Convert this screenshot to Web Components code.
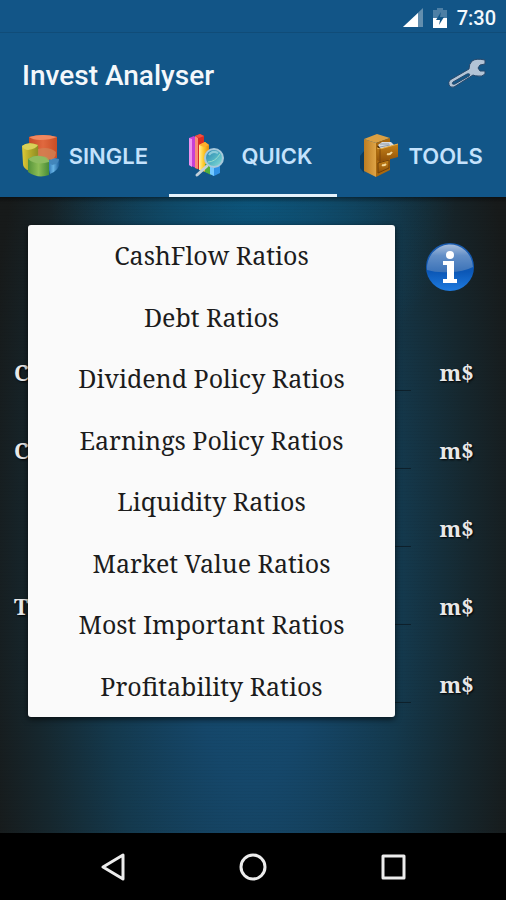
<!DOCTYPE html>
<html lang="en">
<head>
<meta charset="utf-8">
<meta name="viewport" content="width=device-width, initial-scale=1">
<title>Invest Analyser</title>
<style>
  body {
    margin: 0;
    background: #000;
    font-family: Roboto, sans-serif;
  }
</style>
</head>
<body>
<invest-app></invest-app>

<script>
const SERIF = '"Noto Serif", "Droid Serif", "DejaVu Serif Condensed", "DejaVu Serif", serif';

const icons = {
  single: `
    <svg width="40" height="44" viewBox="0 0 40 44" aria-hidden="true">
      <defs>
        <linearGradient id="red"><stop offset="0" stop-color="#c64a26"/><stop offset=".5" stop-color="#e0693f"/><stop offset="1" stop-color="#c84d25"/></linearGradient>
        <linearGradient id="yellow"><stop offset="0" stop-color="#e2cb36"/><stop offset=".4" stop-color="#b9ad2b"/><stop offset="1" stop-color="#8b8a22"/></linearGradient>
        <linearGradient id="green"><stop offset="0" stop-color="#549239"/><stop offset=".5" stop-color="#8cbd56"/><stop offset="1" stop-color="#468b37"/></linearGradient>
        <linearGradient id="blue"><stop offset="0" stop-color="#1b61a5"/><stop offset=".5" stop-color="#67b3e4"/><stop offset="1" stop-color="#175996"/></linearGradient>
      </defs>
      <path d="M8 3Q22 -1 36 3V24Q28 28 17 22L8 14Z" fill="url(#red)"/>
      <path d="M8 3Q22 -1 36 3Q29 6 19 6Q12 6 8 3Z" fill="#f08860"/>
      <path d="M1 12Q7 7 17 11L18 24Q8 23 8 37Q2 34 2 30Z" fill="url(#yellow)"/>
      <path d="M1 12Q7 7 17 11Q15 15 7 16Q3 16 1 12Z" fill="#d9d058"/>
      <path d="M26 28Q30 23 38 25Q41 35 29 40Z" fill="url(#blue)"/>
      <path d="M27 28Q31 23 38 25Q38 30 31 31Z" fill="#4286bb"/>
      <path d="M7 25Q13 21 20 22Q29 22 28 28V41Q17 45 7 38Z" fill="url(#green)"/>
      <path d="M7 25Q13 21 20 22Q29 22 28 28Q15 32 7 25Z" fill="#8ebc60"/>
      <path d="M17 15Q28 12 35 18Q35 26 27 26Q25 22 17 22Z" fill="#d08455" opacity=".75"/>
    </svg>`,

  quick: `
    <svg width="40" height="44" viewBox="6 0 40 44" overflow="visible" aria-hidden="true">
      <defs>
        <linearGradient id="lens" x1="0" y1="0" x2="1" y2="1"><stop offset="0" stop-color="#287eac"/><stop offset=".55" stop-color="#53b5c5"/><stop offset="1" stop-color="#92e3d9"/></linearGradient>
        <linearGradient id="gold"><stop offset="0" stop-color="#fff0a0"/><stop offset=".4" stop-color="#ffcf31"/><stop offset="1" stop-color="#e48b10"/></linearGradient>
      </defs>
      <path d="M1 4L6 2L8 4V34L1 31Z" fill="#c740d4"/>
      <path d="M1 4L4 5V33L1 31Z" fill="#ed91ee"/>
      <path d="M7 2L12 0L16 2V37L7 34Z" fill="#d92c25"/>
      <path d="M7 2L10 4V35L7 34Z" fill="#fa8b75"/>
      <path d="M7 2L12 0L16 2L11 4Z" fill="#f3523f"/>
      <path d="M11 11L17 8L21 11V39L11 36Z" fill="url(#gold)"/>
      <path d="M11 11L17 8L21 11L16 13Z" fill="#ffad2b"/>
      <path d="M17 30L23 30V41L17 38Z" fill="#4fae3c"/>
      <path d="M22 32L28 29L32 32V39L26 42L22 40Z" fill="#3192e6"/>
      <path d="M22 32L26 34V42L22 40Z" fill="#73c8ff"/>
      <path d="M9 41L19 32" stroke="#c3d0da" stroke-width="3" stroke-linecap="round"/>
      <circle cx="26" cy="24" r="9" fill="url(#lens)" stroke="#a8c9db" stroke-width="2"/>
      <path d="M21 21Q24 16 30 19" fill="none" stroke="#8bcbd9" stroke-width="2"/>
      <path d="M20 28Q27 28 32 20" fill="none" stroke="#9adecc" stroke-width="1"/>
    </svg>`,

  tools: `
    <svg width="40" height="44" viewBox="0 0 40 44" aria-hidden="true">
      <defs>
        <linearGradient id="side"><stop offset="0" stop-color="#bd7d22"/><stop offset="1" stop-color="#dfa446"/></linearGradient>
        <linearGradient id="drawer" x1="0" y1="0" x2="0" y2="1"><stop offset="0" stop-color="#c68319"/><stop offset="1" stop-color="#8f5008"/></linearGradient>
      </defs>
      <path d="M0 22L4 17V39L0 34Z" fill="#0b3d62"/>
      <path d="M4 5L16 9V43L4 37Z" fill="url(#side)"/>
      <path d="M4 5L17 0L30 4L16 9Z" fill="#dba043"/>
      <path d="M16 9L30 4V36L16 43Z" fill="#a9680e"/>
      <path d="M18 29L29 26V34L18 39Z" fill="url(#drawer)" stroke="#704009"/>
      <path d="M17 12L29 8V14L20 18Z" fill="#573308"/>
      <path d="M18 11L22 8L31 8L34 11L21 15Z" fill="#d6dbe0"/>
      <path d="M20 10L29 10M20 13L30 11" stroke="#909ba8"/>
      <path d="M17 14L20 15L38 10V23L20 28L17 26Z" fill="url(#drawer)"/>
      <path d="M17 14L20 15L38 10" fill="none" stroke="#eab14a"/>
      <path d="M20 15V28" stroke="#7c470a"/>
      <path d="M27 20Q30 21 32 18M22 31Q24 32 26 30" fill="none" stroke="#f4d99a" stroke-width="2"/>
    </svg>`,

  wrench: `
    <svg width="40" height="34" viewBox="0 0 40 34" aria-hidden="true">
      <path d="M3 23L22 12Q22 7 25 4Q29 1 38 3L38 7L33 8L31 11L33 14L38 14L38 17Q35 20 31 19Q28 19 26 18L7 30Q3 31 2 28Q1 25 3 23Z" fill="#b3c4d6" stroke="#28486a" stroke-width="1"/>
      <path d="M6 25L20 17Q24 16 22 19L8 27Q4 28 6 25Z" fill="#125688" stroke="#28486a" stroke-width="1"/>
    </svg>`,

  info: `
    <svg width="50" height="52" viewBox="0 0 50 52" aria-hidden="true">
      <defs>
        <linearGradient id="ball" x1="0" y1="0" x2="0" y2="1"><stop offset="0" stop-color="#1c5cae"/><stop offset=".6" stop-color="#0b57b6"/><stop offset="1" stop-color="#1e7be0"/></linearGradient>
        <linearGradient id="gloss" x1="0" y1="0" x2="0" y2="1"><stop offset="0" stop-color="#a9bfdd"/><stop offset=".4" stop-color="#638fc7"/><stop offset="1" stop-color="#3a72b8"/></linearGradient>
      </defs>
      <circle cx="25" cy="26" r="24" fill="url(#ball)"/>
      <path d="M2 29A23 24 0 1 1 48 26Q38 31 25 31Q12 32 2 29Z" fill="url(#gloss)"/>
      <circle cx="25" cy="14" r="4" fill="#fff"/>
      <path d="M18 20H29V38H32V42H18V38H22V24H18Z" fill="#fff"/>
    </svg>`
};

class StatusBar extends HTMLElement {
  constructor() {
    super();
    this.attachShadow({ mode: 'open' });
    this.shadowRoot.innerHTML = `
      <style>
        :host {
          display: flex;
          align-items: center;
          justify-content: flex-end;
          height: 33px;
          padding: 4px 10px 0 0;
          box-sizing: border-box;
          gap: 10px;
          background: #125587;
          border-bottom: 1px solid #104c78;
          color: #f2f8fc;
          font-size: 20px;
          font-weight: 500;
        }
        svg { display: block; }
      </style>
      <svg width="20" height="20" viewBox="0 0 20 20" aria-hidden="true">
        <path d="M0 19L20 0V19Z" fill="#638eae"/>
        <path d="M0 19L15 5V19Z" fill="#fff"/>
      </svg>
      <svg width="14" height="20" viewBox="0 0 14 20" aria-hidden="true">
        <path d="M4 0H10V2H14V20H0V2H4Z" fill="#4d7fa5"/>
        <path d="M0 10H14V20H0Z" fill="#fff"/>
        <path d="M8 4L3 12H7L6 17L11 9H7Z" fill="#125587"/>
      </svg>
      <slot></slot>
    `;
  }
}

class AppHeader extends HTMLElement {
  constructor() {
    super();
    this.attachShadow({ mode: 'open' });
    this.shadowRoot.innerHTML = `
      <style>
        :host {
          display: flex;
          align-items: center;
          justify-content: space-between;
          height: 82px;
          padding: 0 19px 0 22px;
          color: #f4f8fb;
        }
        h1 {
          margin: 0;
          padding-top: 2px;
          font-size: 28px;
          font-weight: 500;
        }
        button {
          padding: 0;
          border: 0;
          background: none;
          cursor: pointer;
        }
        svg { display: block; }
      </style>
      <h1><slot></slot></h1>
      <button type="button" aria-label="Settings">${icons.wrench}</button>
    `;
  }
}

class TabItem extends HTMLElement {
  connectedCallback() {
    this.attachShadow({ mode: 'open' });
    this.shadowRoot.innerHTML = `
      <style>
        :host {
          display: block;
          flex: 1;
        }
        button {
          display: flex;
          align-items: center;
          justify-content: center;
          gap: 8px;
          width: 100%;
          height: 82px;
          padding: 3px 0 0;
          border: 0;
          border-bottom: 3px solid transparent;
          background: none;
          color: #c4e2fc;
          font: 600 22px Inter, "Liberation Sans", sans-serif;
          cursor: pointer;
        }
        :host([active]) button { border-color: #e4f2fc; }
        svg { display: block; }
      </style>
      <button type="button" role="tab" aria-selected="${this.hasAttribute('active')}">
        ${icons[this.getAttribute('icon')]}
        <span><slot></slot></span>
      </button>
    `;
  }
}

class AmountRow extends HTMLElement {
  connectedCallback() {
    this.attachShadow({ mode: 'open' });
    this.shadowRoot.innerHTML = `
      <style>
        :host {
          display: grid;
          grid-template-columns: 136px 1fr 95px;
          align-items: center;
          height: 78px;
          color: #e8e8e8;
          font: bold 22px ${SERIF};
          text-shadow: 1px 1px 2px #000;
        }
        label, .unit { padding-bottom: 3px; }
        label { padding-left: 14px; }
        input {
          height: 36px;
          min-width: 0;
          box-sizing: border-box;
          border: 0;
          border-bottom: 1px solid #0d202b;
          background: none;
          color: inherit;
          font: inherit;
        }
        .unit {
          padding-right: 4px;
          text-align: center;
        }
      </style>
      <label for="amount"><slot></slot></label>
      <input id="amount" type="text" inputmode="decimal">
      <span class="unit">m$</span>
    `;
  }
}

class RatioMenu extends HTMLElement {
  constructor() {
    super();
    this.attachShadow({ mode: 'open' });
    this.items = [
      'CashFlow Ratios',
      'Debt Ratios',
      'Dividend Policy Ratios',
      'Earnings Policy Ratios',
      'Liquidity Ratios',
      'Market Value Ratios',
      'Most Important Ratios',
      'Profitability Ratios'
    ];
    this.render();
  }

  render() {
    this.shadowRoot.innerHTML = `
      <style>
        :host {
          display: flex;
          flex-direction: column;
          border-radius: 3px;
          background: #fafafa;
          box-shadow: 0 2px 6px rgba(0, 0, 0, 0.7);
        }
        button {
          flex: 1;
          padding: 0 0 1px;
          border: 0;
          background: none;
          color: #1c1c1c;
          font: 25px ${SERIF};
          cursor: pointer;
        }
      </style>
      ${this.items.map((item) => `<button type="button" role="menuitem">${item}</button>`).join('')}
    `;

    this.shadowRoot.querySelectorAll('button').forEach((button) => {
      button.addEventListener('click', () => {
        this.dispatchEvent(
          new CustomEvent('pick-ratio', {
            detail: { name: button.textContent },
            bubbles: true,
            composed: true,
          })
        );
      });
    });
  }
}

class NavBar extends HTMLElement {
  constructor() {
    super();
    this.attachShadow({ mode: 'open' });
    this.shadowRoot.innerHTML = `
      <style>
        :host {
          display: grid;
          grid-template-columns: repeat(3, 1fr);
          height: 67px;
          padding: 0 43px;
          background: #000;
        }
        button {
          padding: 0;
          border: 0;
          background: none;
          cursor: pointer;
        }
        svg {
          display: block;
          margin: auto;
          fill: none;
          stroke: #ececec;
          stroke-width: 3;
          stroke-linejoin: round;
        }
      </style>
      <button type="button" aria-label="Back">
        <svg width="28" height="28" viewBox="0 0 28 28"><path d="M4 14L24 2V26Z"/></svg>
      </button>
      <button type="button" aria-label="Home">
        <svg width="28" height="28" viewBox="0 0 28 28"><circle cx="14" cy="14" r="12"/></svg>
      </button>
      <button type="button" aria-label="Recent apps">
        <svg width="28" height="28" viewBox="0 0 28 28"><path d="M4 3H25V25H4Z"/></svg>
      </button>
    `;
  }
}

class InvestApp extends HTMLElement {
  constructor() {
    super();
    this.attachShadow({ mode: 'open' });
    this.shadowRoot.innerHTML = `
      <style>
        :host {
          display: flex;
          flex-direction: column;
          min-height: 100vh;
        }
        .top { background: #125688; }
        nav { display: flex; }
        main {
          position: relative;
          flex: 1;
          padding-top: 36px;
          background:
            linear-gradient(rgba(0, 0, 0, 0.4), transparent 6px),
            repeating-linear-gradient(rgba(0, 0, 0, 0.03) 0 1px, transparent 1px 3px),
            radial-gradient(ellipse 40% 30% at 50% 0, rgba(8, 94, 138, 0.7), transparent),
            radial-gradient(ellipse 54% 130% at 50% 60%, #144e73 0%, #15476a 25%, #14394d 55%, #16272e 80%, #171a1a 100%);
        }
        .info {
          display: block;
          margin: 8px 31px 41px auto;
          padding: 0;
          border: 0;
          background: none;
          cursor: pointer;
        }
        .info svg { display: block; }
        ratio-menu {
          position: absolute;
          top: 28px;
          right: 111px;
          bottom: 116px;
          left: 28px;
        }
      </style>
      <div class="top">
        <status-bar>7:30</status-bar>
        <app-header>Invest Analyser</app-header>
        <nav role="tablist">
          <tab-item icon="single">SINGLE</tab-item>
          <tab-item icon="quick" active>QUICK</tab-item>
          <tab-item icon="tools">TOOLS</tab-item>
        </nav>
      </div>
      <main>
        <button class="info" type="button" aria-label="Information">${icons.info}</button>
        <amount-row>C</amount-row>
        <amount-row>C</amount-row>
        <amount-row></amount-row>
        <amount-row>T</amount-row>
        <amount-row></amount-row>
        <ratio-menu role="menu"></ratio-menu>
      </main>
      <nav-bar></nav-bar>
    `;
  }
}

customElements.define('status-bar', StatusBar);
customElements.define('app-header', AppHeader);
customElements.define('tab-item', TabItem);
customElements.define('amount-row', AmountRow);
customElements.define('ratio-menu', RatioMenu);
customElements.define('nav-bar', NavBar);
customElements.define('invest-app', InvestApp);
</script>
</body>
</html>
